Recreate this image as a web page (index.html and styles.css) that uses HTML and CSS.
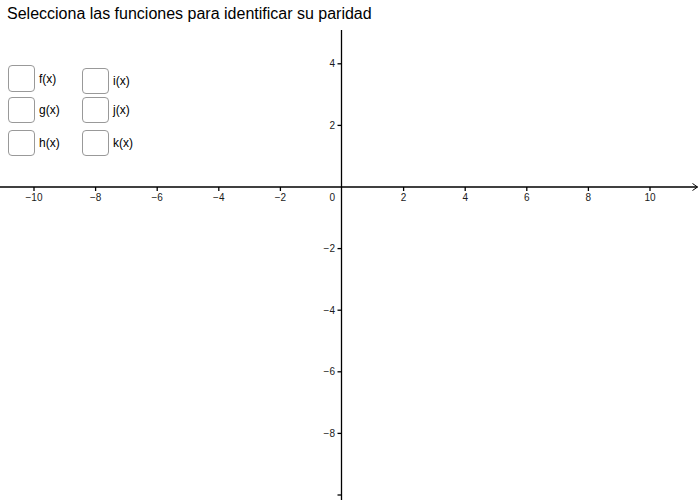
FILE: index.html
```html
<!DOCTYPE html>
<html lang="es">
<head>
<meta charset="utf-8">
<title>Paridad de funciones</title>
<link rel="stylesheet" href="styles.css">
</head>
<body>
<div class="applet">
  <svg class="graph" width="700" height="500" viewBox="0 0 700 500" xmlns="http://www.w3.org/2000/svg">
    <g class="axes">
      <line x1="0" y1="187" x2="697.5" y2="187"/>
      <polyline class="arrow" points="692.5,183.5 697.5,187 692.5,190.5"/>
      <line x1="341.5" y1="30" x2="341.5" y2="500"/>
    </g>
    <g class="ticks">
      <line x1="34" y1="187" x2="34" y2="191"/>
      <line x1="95.6" y1="187" x2="95.6" y2="191"/>
      <line x1="157.2" y1="187" x2="157.2" y2="191"/>
      <line x1="218.8" y1="187" x2="218.8" y2="191"/>
      <line x1="280.4" y1="187" x2="280.4" y2="191"/>
      <line x1="403.6" y1="187" x2="403.6" y2="191"/>
      <line x1="465.2" y1="187" x2="465.2" y2="191"/>
      <line x1="526.8" y1="187" x2="526.8" y2="191"/>
      <line x1="588.4" y1="187" x2="588.4" y2="191"/>
      <line x1="650" y1="187" x2="650" y2="191"/>
      <line x1="337.5" y1="63.8" x2="341.5" y2="63.8"/>
      <line x1="337.5" y1="125.4" x2="341.5" y2="125.4"/>
      <line x1="337.5" y1="248.6" x2="341.5" y2="248.6"/>
      <line x1="337.5" y1="310.2" x2="341.5" y2="310.2"/>
      <line x1="337.5" y1="371.8" x2="341.5" y2="371.8"/>
      <line x1="337.5" y1="433.4" x2="341.5" y2="433.4"/>
      <line x1="337.5" y1="495" x2="341.5" y2="495"/>
    </g>
    <g class="xlabels">
      <text x="34" y="201">−10</text>
      <text x="95.6" y="201">−8</text>
      <text x="157.2" y="201">−6</text>
      <text x="218.8" y="201">−4</text>
      <text x="280.4" y="201">−2</text>
      <text x="403.6" y="201">2</text>
      <text x="465.2" y="201">4</text>
      <text x="526.8" y="201">6</text>
      <text x="588.4" y="201">8</text>
      <text x="650" y="201">10</text>
    </g>
    <g class="ylabels">
      <text x="335" y="201">0</text>
      <text x="335" y="67.3">4</text>
      <text x="335" y="128.9">2</text>
      <text x="335" y="252.1">−2</text>
      <text x="335" y="313.7">−4</text>
      <text x="335" y="375.3">−6</text>
      <text x="335" y="436.9">−8</text>
    </g>
  </svg>

  <h1 class="title">Selecciona las funciones para identificar su paridad</h1>

  <div class="choices">
    <div class="col col-a">
      <label class="item item-first"><span class="box"></span><span class="name">f(x)</span></label>
      <label class="item"><span class="box"></span><span class="name">g(x)</span></label>
      <label class="item"><span class="box"></span><span class="name">h(x)</span></label>
    </div>
    <div class="col col-b">
      <label class="item item-first"><span class="box"></span><span class="name">i(x)</span></label>
      <label class="item"><span class="box"></span><span class="name">j(x)</span></label>
      <label class="item"><span class="box"></span><span class="name">k(x)</span></label>
    </div>
  </div>
</div>
</body>
</html>
```
FILE: styles.css
```css
html, body {
  margin: 0;
  padding: 0;
  background: #ffffff;
}

.applet {
  position: relative;
  width: 700px;
  height: 500px;
  overflow: hidden;
  background: #ffffff;
  font-family: "Liberation Sans", Arial, sans-serif;
  color: #000000;
}

.graph {
  position: absolute;
  left: 0;
  top: 0;
}

.axes line,
.ticks line {
  stroke: #000000;
  stroke-width: 1.3;
}

.axes .arrow {
  fill: none;
  stroke: #000000;
  stroke-width: 1;
}

.xlabels text,
.ylabels text {
  font-family: "Liberation Sans", Arial, sans-serif;
  font-size: 10px;
  fill: #1a1a1a;
}

.xlabels text {
  text-anchor: middle;
}

.ylabels text {
  text-anchor: end;
}

.title {
  position: relative;
  margin: 0;
  padding: 4px 0 0 7px;
  font-size: 16px;
  font-weight: normal;
  line-height: 20px;
}

.choices {
  position: relative;
  display: flex;
  align-items: flex-start;
  margin-top: 41px;
  padding-left: 8px;
}

.col {
  display: flex;
  flex-direction: column;
  row-gap: 7px;
}

.col-a {
  width: 74px;
}

.col-a .item-first {
  height: 27px;
  margin-bottom: -2px;
}

.col-b {
  margin-top: 3px;
}

.col-b .item-first {
  margin-bottom: -4px;
}

.item {
  display: flex;
  align-items: center;
  gap: 4px;
  height: 26px;
}

.box {
  box-sizing: border-box;
  width: 27px;
  height: 100%;
  border: 1.5px solid #999999;
  border-radius: 4px;
  background: #ffffff;
}

.name {
  font-size: 12px;
  line-height: 14px;
}
```
